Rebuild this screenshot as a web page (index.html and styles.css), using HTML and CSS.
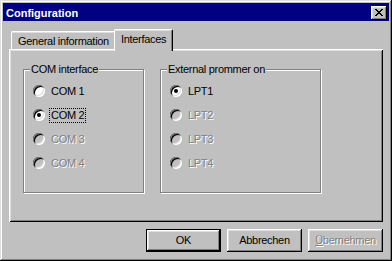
FILE: index.html
```html
<!DOCTYPE html>
<html>
<head lang="en">
    <meta charset="UTF-8">
    <title>Configuration</title>
    <link rel="stylesheet" href="styles.css">
</head>
<body>
<div class="window">
    <div class="titlebar">
        <span class="title">Configuration</span>
        <button class="close">
            <svg width="8" height="7" viewBox="0 0 8 7" shape-rendering="crispEdges">
                <path fill="#000" d="M0 0h2v1h-2z M6 0h2v1h-2z M1 1h2v1h-2z M5 1h2v1h-2z M2 2h4v1h-4z M3 3h2v1h-2z M2 4h4v1h-4z M1 5h2v1h-2z M5 5h2v1h-2z M0 6h2v1h-2z M6 6h2v1h-2z"/>
            </svg>
        </button>
    </div>
    <div class="content">
        <div class="tabs">
            <div class="tab">General information</div>
            <div class="tab active">Interfaces</div>
        </div>
        <div class="panel">
            <fieldset class="group com">
                <legend>COM interface</legend>
                <div class="options">
                    <div class="option"><span class="radio"></span><span class="label">COM 1</span></div>
                    <div class="option"><span class="radio checked"></span><span class="label focus">COM 2</span></div>
                    <div class="option disabled"><span class="radio"></span><span class="label">COM 3</span></div>
                    <div class="option disabled"><span class="radio"></span><span class="label">COM 4</span></div>
                </div>
            </fieldset>
            <fieldset class="group lpt">
                <legend>External prommer on</legend>
                <div class="options">
                    <div class="option"><span class="radio checked"></span><span class="label">LPT1</span></div>
                    <div class="option disabled"><span class="radio"></span><span class="label">LPT2</span></div>
                    <div class="option disabled"><span class="radio"></span><span class="label">LPT3</span></div>
                    <div class="option disabled"><span class="radio"></span><span class="label">LPT4</span></div>
                </div>
            </fieldset>
        </div>
        <div class="buttons">
            <button class="btn default">OK</button>
            <button class="btn">Abbrechen</button>
            <button class="btn disabled"><u>Ü</u>bernehmen</button>
        </div>
    </div>
</div>
</body>
</html>
```

FILE: styles.css
```css
*{
    margin: 0;
    padding: 0;
    box-sizing: border-box;
}
body{
    background: #c0c0c0;
    font-family: "Liberation Sans", Arial, sans-serif;
    font-size: 11px;
    letter-spacing: -0.3px;
    color: #000;
}
.window{
    width: 392px;
    height: 261px;
    padding: 3px;
    background: #c0c0c0;
    box-shadow: inset -1px -1px #000, inset 1px 1px #dfdfdf, inset -2px -2px #808080, inset 2px 2px #fff;
}
.titlebar{
    height: 18px;
    background: #000080;
    display: flex;
    justify-content: space-between;
    align-items: flex-start;
    padding: 0 2px 0 3px;
}
.title{
    color: #fff;
    font-weight: bold;
    letter-spacing: 0;
    line-height: 13px;
    padding-top: 4px;
}
.close{
    width: 16px;
    height: 14px;
    margin-top: 3px;
    border: 0;
    background: #c0c0c0;
    box-shadow: inset -1px -1px #000, inset 1px 1px #fff, inset -2px -2px #808080, inset 2px 2px #dfdfdf;
    display: flex;
    align-items: flex-start;
    justify-content: flex-start;
    padding: 3px 0 0 4px;
}
.close svg{
    display: block;
}
.content{
    padding: 8px 6px 0;
}
.tabs{
    display: flex;
    align-items: flex-end;
    padding-left: 2px;
    margin-bottom: -2px;
}
.tab{
    height: 18px;
    margin-bottom: 2px;
    padding: 3px 6px 0;
    line-height: 13px;
    white-space: nowrap;
    background: #c0c0c0;
    border-top: 1px solid #fff;
    border-left: 1px solid #fff;
    border-right: 1px solid #000;
    border-radius: 2px 2px 0 0;
    box-shadow: inset -1px 0 #808080, inset 0 1px #dfdfdf;
}
.tab.active{
    position: relative;
    z-index: 1;
    height: 22px;
    margin: 0 -2px;
    padding-top: 3px;
}
.panel{
    height: 173px;
    padding: 2px 0 0 14px;
    display: flex;
    align-items: flex-start;
    gap: 16px;
    box-shadow: inset 1px 1px #fff, inset -1px -1px #000, inset 2px 2px #dfdfdf, inset -2px -2px #808080;
}
.group{
    margin-top: 12px;
    height: 130px;
    padding: 0;
    border: 1px solid #808080;
    box-shadow: 1px 1px 0 #fff, inset 1px 1px 0 #fff;
}
.com{
    width: 121px;
}
.lpt{
    width: 161px;
}
.group legend{
    margin-left: 6px;
    padding: 0 1px;
    line-height: 13px;
    background: #c0c0c0;
}
.options{
    padding: 3px 0 0 9px;
}
.option{
    height: 24px;
    display: flex;
    align-items: center;
}
.radio{
    position: relative;
    width: 12px;
    height: 12px;
    border-radius: 50%;
    background: #fff;
    box-shadow: inset 1px 1px #808080, inset -1px -1px #fff, inset 2px 2px #000, inset -2px -2px #dfdfdf;
}
.radio.checked::after{
    content: "";
    position: absolute;
    left: 4px;
    top: 4px;
    width: 4px;
    height: 4px;
    border-radius: 50%;
    background: #000;
}
.label{
    margin-left: 4px;
    padding: 0 1px;
    line-height: 13px;
    border: 1px dotted transparent;
}
.label.focus{
    border-color: #000;
}
.disabled .radio{
    background: #c0c0c0;
}
.disabled .label{
    color: #808080;
    text-shadow: 1px 1px 0 #fff;
}
.buttons{
    display: flex;
    justify-content: flex-end;
    gap: 6px;
    margin-top: 7px;
}
.btn{
    width: 75px;
    height: 23px;
    border: 0;
    background: #c0c0c0;
    font-family: "Liberation Sans", Arial, sans-serif;
    font-size: 11px;
    letter-spacing: -0.3px;
    line-height: 13px;
    color: #000;
    box-shadow: inset -1px -1px #000, inset 1px 1px #fff, inset -2px -2px #808080, inset 2px 2px #dfdfdf;
}
.btn.default{
    box-shadow: inset 0 0 0 1px #000, inset -2px -2px #000, inset 2px 2px #fff, inset -3px -3px #808080, inset 3px 3px #dfdfdf;
}
.btn.disabled{
    color: #808080;
    text-shadow: 1px 1px 0 #fff;
}
```
